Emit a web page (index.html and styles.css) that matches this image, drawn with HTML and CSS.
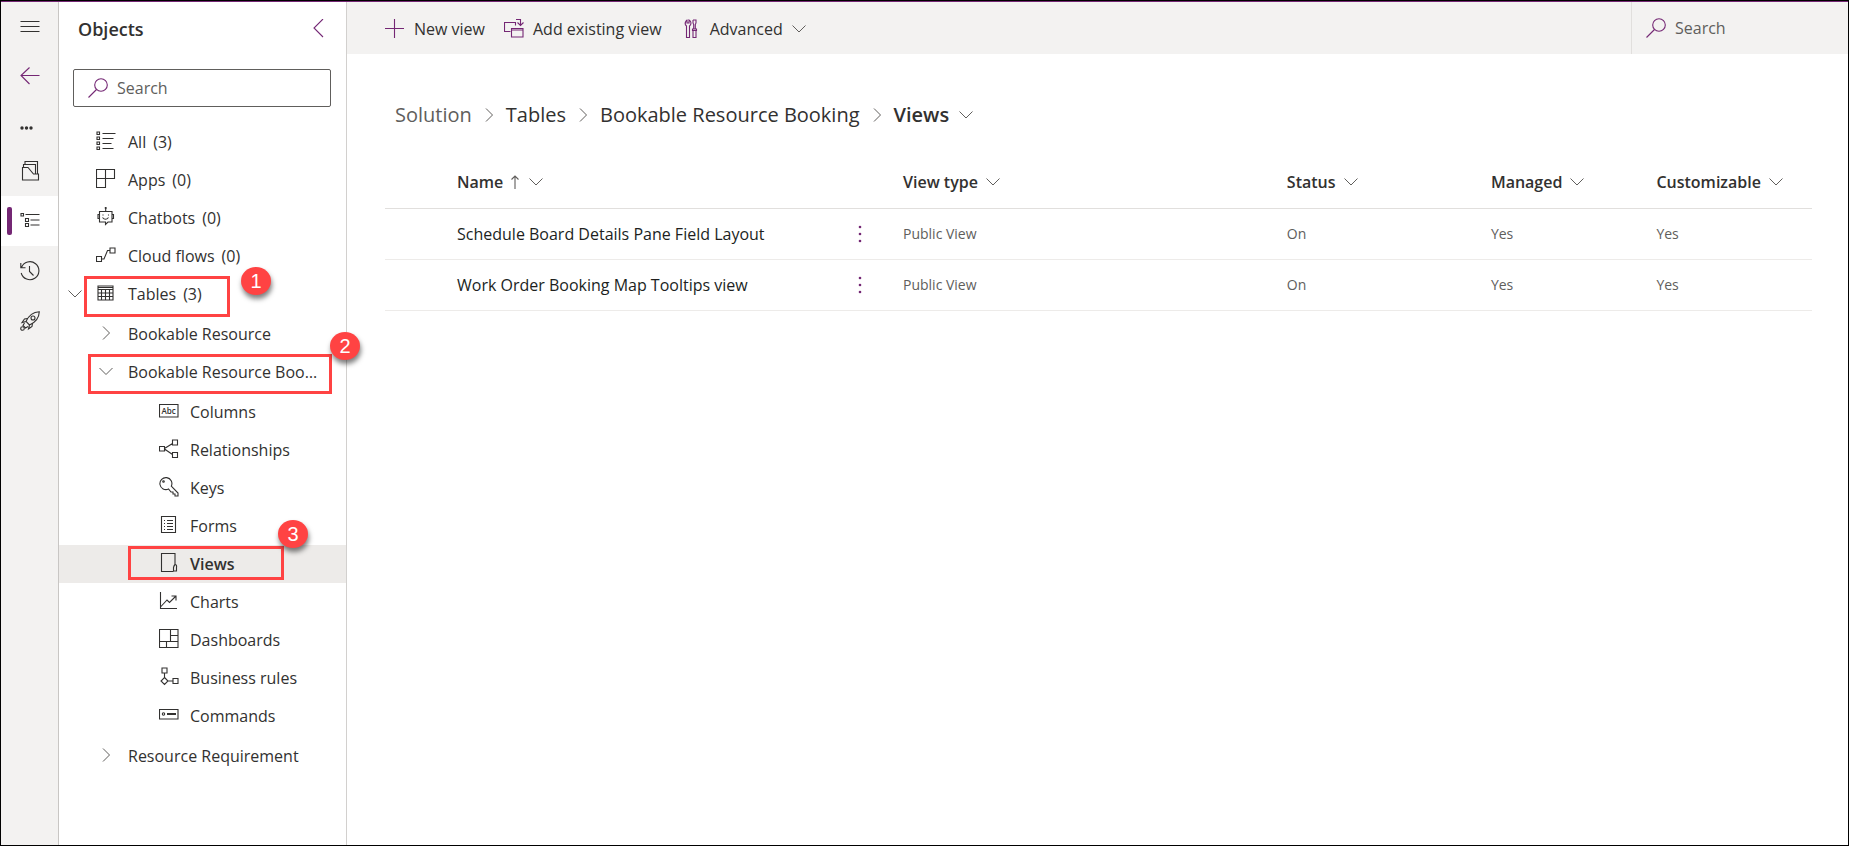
FILE: index.html
```html
<!DOCTYPE html>
<html lang="en">
<head>
<meta charset="utf-8">
<title>Objects - Views</title>
<link rel="stylesheet" href="styles.css">
</head>
<body>
<svg class="defs" aria-hidden="true">
  <symbol id="search" viewBox="0 0 20 20"><circle cx="13" cy="7" r="6.3"/><path d="M8.5 11.5L.5 19.5"/></symbol>
  <symbol id="down" viewBox="0 0 14 14"><path d="M.5 3.500L7 10 13.500 3.500"/></symbol>
  <symbol id="right" viewBox="0 0 14 14"><path d="M4 .5L10.500 7 4 13.500"/></symbol>
</svg>
<div class="app">
  <nav class="rail" aria-label="Main">
    <button class="rail-item" aria-label="Menu"><svg class="icon" viewBox="0 0 20 20"><path d="M.5 4.500h19M.5 9.500h19M.5 14.500h19"/></svg></button>
    <button class="rail-item accent" aria-label="Back"><svg class="icon" viewBox="0 0 20 20"><path d="M19.500 8.500H1M9.500 .5L1 8.500 9.500 17"/></svg></button>
    <button class="rail-item more" aria-label="More"><svg class="icon solid" viewBox="0 0 20 20"><circle cx="2" cy="10" r="1.700"/><circle cx="6.500" cy="10" r="1.700"/><circle cx="11" cy="10" r="1.700"/></svg></button>
    <button class="rail-item" aria-label="Overview"><svg class="icon" viewBox="0 0 20 20"><path d="M2.500 6.500v12.500h16v-6h-5L8 6.500zM3.500 6V3.500H15.500v9M5 3V.5h12.500V13"/></svg></button>
    <button class="rail-item current" aria-label="Objects"><svg class="icon" viewBox="0 0 20 20"><path d="M1 2.500h2.500v2.500H1zM5.500 7.500h3v3h-3zM5.500 12.500h3v3h-3zM5.500 3.500h14M10.500 9h9M10.500 14h9"/></svg></button>
    <button class="rail-item" aria-label="History"><svg class="icon" viewBox="0 0 20 20"><path d="M1.500 6.500A9 9 0 1 1 1.200 12M.8 2v4.800h4.700M9.500 5v5.500l4 4"/></svg></button>
    <button class="rail-item" aria-label="Deploy"><svg class="icon" viewBox="0 0 20 20"><path d="M6 10.500C8 6 12 1 19.300.700 19 8 14 12 9.500 14zM7.500 7.500l-3 .5L2 11.500l4-1M12.500 12.500l-.5 3L8.500 18l1-4M4.500 12L3 14.500l2.500 2.500L8 15.500"/><circle cx="13" cy="7" r="2"/><circle cx="2.500" cy="17.500" r="1.800"/></svg></button>
  </nav>

  <aside class="panel">
    <header class="panel-head">
      <h2 class="panel-title">Objects</h2>
      <button class="collapse" aria-label="Collapse"><svg class="icon" viewBox="0 0 20 20"><path d="M14 0L5 9 14 18"/></svg></button>
    </header>
    <label class="search-box"><svg class="icon accent"><use href="#search"/></svg><input type="search" placeholder="Search" aria-label="Search objects"></label>
    <ul class="tree">
      <li><a class="row" href="#"><svg class="icon" viewBox="0 0 20 20"><path d="M1 1h2.500v2.500H1zM1 6h2.500v2.500H1zM1 11h2.500v2.500H1zM1 16h2.500v2.500H1zM6.500 2.500h13M6.500 7.500h11M6.500 12.500h9M6.500 17.500h11"/></svg>All <span class="count">(3)</span></a></li>
      <li><a class="row" href="#"><svg class="icon" viewBox="0 0 20 20"><path d="M.5.500h18v9H.5zM.5.500h9v18h-9z"/></svg>Apps <span class="count">(0)</span></a></li>
      <li><a class="row" href="#"><svg class="icon" viewBox="0 0 20 20"><path d="M3.500 4.500h12.500v10.500h-4L9.500 17.500v-2.500h-6zM9.700 4.500V1M3.500 7.500H2v4h1.500M16 7.500h1.500v4H16M6.500 10.500q3 3.500 6 0"/><circle cx="9.700" cy="1" r=".5"/><path d="M7 7.500v1M12.500 7.500v1"/></svg>Chatbots <span class="count">(0)</span></a></li>
      <li><a class="row" href="#"><svg class="icon" viewBox="0 0 20 20"><path d="M.5 11.500h5v5h-5zM14 3h5v5h-5zM5.500 14H8l3.500-8.500H14"/></svg>Cloud flows <span class="count">(0)</span></a></li>
      <li>
        <a class="row marked mark-tables" href="#"><svg class="chev outer"><use href="#down"/></svg><svg class="icon" viewBox="0 0 20 20"><path d="M2 3h15v14H2zM2 4.500h15M2 6.500h15M2 10h15M2 13.500h15M5.500 6.500v10.500M9.500 6.500v10.500M13.500 6.500v10.500"/></svg>Tables <span class="count">(3)</span><b class="badge">1</b></a>
        <ul class="branch">
          <li><a class="row" href="#"><svg class="icon chev" viewBox="-3 -3 20 20"><path d="M4 .5L10.500 7 4 13.500"/></svg>Bookable Resource</a></li>
          <li>
            <a class="row marked mark-booking" href="#"><svg class="icon chev" viewBox="-3 -3 20 20"><path d="M.5 4L7 10.500 13.500 4"/></svg><span class="clip">Bookable Resource Booking</span><b class="badge">2</b></a>
            <ul class="leaves">
              <li><a class="row" href="#"><svg class="icon" viewBox="0 0 20 20"><path d="M.5 3.500h18.500v12.500H.5z"/><text x="2.500" y="13">Abc</text></svg>Columns</a></li>
              <li><a class="row" href="#"><svg class="icon" viewBox="0 0 20 20"><path d="M.5 7.500h5v4.500h-5zM13.500 1h5v5h-5zM13.500 13.500h5v5h-5zM5.500 9.500l8-5M5.500 10l8 5.500"/></svg>Relationships</a></li>
              <li><a class="row" href="#"><svg class="icon" viewBox="0 0 20 20"><path d="M12.300 9.200L19 16v3h-3v-2h-2v-2h-2l-2.500-3A6 6 0 1 1 12.300 9.200z"/><circle cx="4.500" cy="4.500" r=".8"/></svg>Keys</a></li>
              <li><a class="row" href="#"><svg class="icon" viewBox="0 0 20 20"><path d="M2.500 1.500h14v16h-14zM5 5.500h1M8 5.500h6M5 8.500h1M8 8.500h6M5 11.500h1M8 11.500h6M5 14.500h1M8 14.500h6"/></svg>Forms</a></li>
              <li><a class="row marked mark-views selected" href="#" aria-current="page"><svg class="icon" viewBox="0 0 20 20"><path d="M14.500 18.500h-12V.5H16v11M16 11.500q2 0 1.500 3v3.500h-3v-3.500q.5-2 1.500-3z"/></svg>Views<b class="badge">3</b></a></li>
              <li><a class="row" href="#"><svg class="icon" viewBox="0 0 20 20"><path d="M1.500 1v16.500H18M1.500 16L8 9l2.500 2.500L17 5M12.500 5H17v4.500"/></svg>Charts</a></li>
              <li><a class="row" href="#"><svg class="icon" viewBox="0 0 20 20"><path d="M.5.500h18.500v18H.5zM.5 12.500H19M11.500.500v12M11.500 6.500H19M7.500 12.500v6"/></svg>Dashboards</a></li>
              <li><a class="row" href="#"><svg class="icon" viewBox="0 0 20 20"><path d="M3 1h5v5H3zM5.500 6v5M5.500 10.500L9 14l-3.500 3.500L2 14zM9 14h5M14 11.500h5v5h-5z"/></svg>Business rules</a></li>
              <li><a class="row" href="#"><svg class="icon" viewBox="0 0 20 20"><path d="M.5 4.500h18.500v9.500H.5zM8 8.500h9M8 9.500h9"/><circle cx="4.500" cy="9" r="1.200"/></svg>Commands</a></li>
            </ul>
          </li>
          <li><a class="row" href="#"><svg class="icon chev" viewBox="-3 -3 20 20"><path d="M4 .5L10.500 7 4 13.500"/></svg>Resource Requirement</a></li>
        </ul>
      </li>
    </ul>
  </aside>

  <main class="content">
    <div class="commands">
      <button class="command"><svg class="icon accent" viewBox="0 0 20 20"><path d="M9.500 0v19M0 9.500h19"/></svg>New view</button>
      <button class="command"><svg class="icon accent" viewBox="0 0 20 20"><path d="M6.500 12.500h-6v-9h11v3M7.500 9.500h11.500v8.500H7.500zM7.500 11H19M12 .5h4.500V6M13.500 3.500l3 3 3-3"/></svg>Add existing view</button>
      <button class="command"><svg class="icon accent" viewBox="0 0 20 20"><path d="M5.500 18.500V7Q3.500 5.500 4.500 3 5.500 1 6 1v3h2V1q2 1 2 3T8.500 7v11.500zM12 1h3v3l-.7 1.500V10M12 1v3l.7 1.500V10M11.500 10h4v1.500h-4zM12 11.500v7h3v-7"/></svg>Advanced<svg class="chev"><use href="#down"/></svg></button>
      <label class="command-search"><svg class="icon accent"><use href="#search"/></svg><input type="search" placeholder="Search" aria-label="Search views"></label>
    </div>
    <nav class="crumbs" aria-label="Breadcrumb">
      <a class="muted" href="#">Solution</a><svg class="chev"><use href="#right"/></svg>
      <a href="#">Tables</a><svg class="chev"><use href="#right"/></svg>
      <a href="#">Bookable Resource Booking</a><svg class="chev"><use href="#right"/></svg>
      <button class="crumb-now">Views<svg class="chev"><use href="#down"/></svg></button>
    </nav>
    <table class="grid">
      <thead>
        <tr>
          <th class="col-name"><button class="sort">Name<svg class="arrow" viewBox="0 0 8 14"><path d="M4 14V1M.5 4.500L4 1l3.500 3.500"/></svg><svg class="chev"><use href="#down"/></svg></button></th>
          <th class="col-menu"></th>
          <th class="col-type"><button class="sort">View type<svg class="chev"><use href="#down"/></svg></button></th>
          <th class="col-status"><button class="sort">Status<svg class="chev"><use href="#down"/></svg></button></th>
          <th class="col-managed"><button class="sort">Managed<svg class="chev"><use href="#down"/></svg></button></th>
          <th class="col-custom"><button class="sort">Customizable<svg class="chev"><use href="#down"/></svg></button></th>
        </tr>
      </thead>
      <tbody>
        <tr>
          <td class="col-name"><a href="#">Schedule Board Details Pane Field Layout</a></td>
          <td><button class="dots" aria-label="More actions"><svg class="icon solid" viewBox="0 0 20 20"><circle cx="10" cy="3" r="1.300"/><circle cx="10" cy="10" r="1.300"/><circle cx="10" cy="17" r="1.300"/></svg></button></td>
          <td>Public View</td><td>On</td><td>Yes</td><td>Yes</td>
        </tr>
        <tr>
          <td class="col-name"><a href="#">Work Order Booking Map Tooltips view</a></td>
          <td><button class="dots" aria-label="More actions"><svg class="icon solid" viewBox="0 0 20 20"><circle cx="10" cy="3" r="1.300"/><circle cx="10" cy="10" r="1.300"/><circle cx="10" cy="17" r="1.300"/></svg></button></td>
          <td>Public View</td><td>On</td><td>Yes</td><td>Yes</td>
        </tr>
      </tbody>
    </table>
  </main>
</div>
</body>
</html>
```
FILE: styles.css
```css
* { box-sizing: border-box; }
body {
  margin: 0;
  font: 16px/24px "Open Sans", "Noto Sans", sans-serif;
  color: #323130;
  background: #fff;
}
a { color: inherit; text-decoration: none; }
button, input { font: inherit; color: inherit; border: 0; background: none; padding: 0; }
ul { list-style: none; margin: 0; padding: 0; }
.defs { position: absolute; width: 0; height: 0; }

.app {
  display: flex;
  min-height: 100vh;
  border: 1px solid #000;
  box-shadow: inset 0 1px #742774;
  padding-top: 1px;
}

.icon, .chev, .arrow { flex: none; fill: none; stroke: currentColor; stroke-width: 1.1; }
.icon { width: 20px; height: 20px; }
.icon text { font-size: 8px; font-weight: 600; fill: currentColor; stroke: none; }
.icon.solid { fill: currentColor; stroke: none; }
.chev { width: 14px; height: 14px; color: #605e5c; stroke-width: 1; }
.icon.chev { width: 20px; height: 20px; }
.accent { color: #742774; }

.rail {
  width: 58px;
  flex: none;
  display: flex;
  flex-direction: column;
  background: #f3f2f1;
  border-right: 1px solid #c8c6c4;
}
.rail-item {
  position: relative;
  height: 50px;
  padding-left: 19px;
  display: flex;
  align-items: center;
}
.rail-item.accent { color: #742774; }
.rail-item.more { height: 44px; padding-top: 8px; }
.rail-item.current { background: #fff; }
.rail-item.current::before {
  content: "";
  position: absolute;
  left: 6px;
  top: 11px;
  bottom: 11px;
  width: 5px;
  border-radius: 2px;
  background: #742774;
}

.panel {
  width: 288px;
  flex: none;
  border-right: 1px solid #d2d0ce;
}
.panel-head {
  display: flex;
  justify-content: space-between;
  align-items: center;
  height: 52px;
  padding: 2px 17px 0 19px;
}
.panel-title { margin: 0; font-size: 18px; font-weight: 600; }
.collapse { display: flex; color: #742774; }
.search-box {
  display: flex;
  align-items: center;
  gap: 9px;
  height: 38px;
  margin: 15px 15px 16px 14px;
  padding: 0 14px;
  border: 1px solid #605e5c;
  border-radius: 2px;
}
input { min-width: 0; width: 100%; outline: 0; }
input::placeholder { color: #605e5c; opacity: 1; }

.row {
  position: relative;
  display: flex;
  align-items: center;
  height: 38px;
  padding: 0 24px 0 37px;
  white-space: nowrap;
}
.row .icon { margin: 0 12px 2px 0; }
.count { margin-left: 7px; }
.branch { padding-top: 2px; }
.leaves { padding: 2px 0; }
.leaves .row { padding-left: 100px; }
.leaves .icon { margin-right: 11px; }
.row .outer { position: absolute; left: 9px; }
.row.selected { background: #edebe9; font-weight: 600; }
.clip { overflow: hidden; text-overflow: ellipsis; }

.marked::after {
  content: "";
  position: absolute;
  border: 3px solid #ff4343;
}
.mark-tables::after { inset: 1px 116px -4px 25px; }
.mark-booking::after { inset: 1px 14px -3px 29px; }
.mark-views::after { inset: 1px 62px 3px 69px; }
.badge {
  position: absolute;
  z-index: 1;
  width: 30px;
  height: 28px;
  border-radius: 50%;
  background: #ff4343;
  box-shadow: 1px 4px 5px rgba(0, 0, 0, .5);
  color: #fff;
  font: 20px/28px "Liberation Sans", sans-serif;
  text-align: center;
}
.mark-tables .badge { right: 75px; top: -8px; }
.mark-booking .badge { right: -14px; top: -21px; }
.mark-views .badge { right: 38px; top: -25px; }

.content { flex: 1; min-width: 0; }
.commands {
  display: flex;
  align-items: center;
  gap: 19px;
  height: 52px;
  padding-left: 38px;
  background: #f3f2f1;
}
.command { display: flex; align-items: center; gap: 9px; padding-top: 1px; }
.command-search {
  display: flex;
  align-items: center;
  gap: 9px;
  align-self: stretch;
  width: 217px;
  margin-left: auto;
  padding-left: 14px;
  border-left: 1px solid #e1dfdd;
}

.crumbs {
  display: flex;
  align-items: center;
  gap: 10px;
  margin-top: 44px;
  padding-left: 48px;
  font-size: 20px;
  line-height: 34px;
}
.crumbs .muted { color: #605e5c; }
.crumb-now { display: flex; align-items: center; gap: 10px; font-weight: 600; }

.grid {
  width: calc(100% - 74px);
  margin: 24px 36px 0 38px;
  table-layout: fixed;
  border-collapse: collapse;
  text-align: left;
}
.grid th { height: 52px; padding: 0; border-bottom: 1px solid #e1dfdd; }
.grid td {
  height: 51px;
  padding: 0;
  border-bottom: 1px solid #edebe9;
  font-size: 14px;
  color: #605e5c;
}
.grid .col-name { width: 32.3%; padding-left: 72px; }
.grid td.col-name { font-size: 16px; color: #201f1e; }
.col-menu { width: 4%; }
.col-type { width: 26.9%; }
.col-status { width: 14.3%; }
.col-managed { width: 11.6%; }
.sort { display: flex; align-items: center; gap: 8px; font-weight: 600; }
.arrow { width: 8px; height: 14px; margin-right: 2px; color: #605e5c; }
.dots { display: flex; padding-left: 4px; color: #742774; }
```
